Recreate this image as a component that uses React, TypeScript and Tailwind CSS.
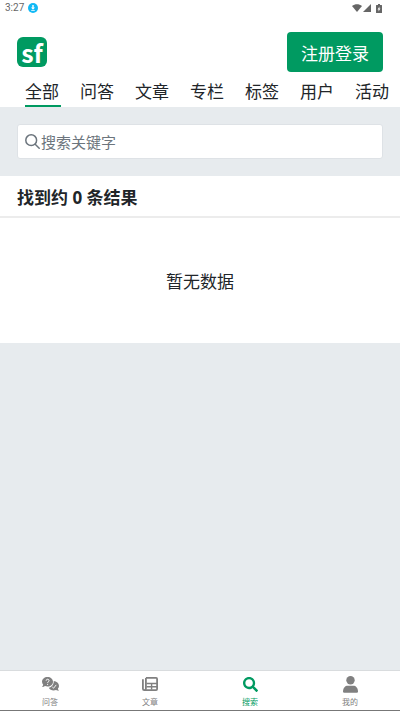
import clsx from "clsx";
import type { ReactNode } from "react";
import { FaSearch } from "react-icons/fa";

const tabs = ["全部", "问答", "文章", "专栏", "标签", "用户", "活动"];

function StatusBar() {
  return (
    <div className="flex h-4 items-center justify-between pl-[5px] pr-[18px] font-['Roboto',sans-serif] text-[10px] leading-4 text-[#666]">
      <div className="flex items-center gap-1">
        <span>3:27</span>
        <svg className="size-[10px]" viewBox="0 0 10 10" aria-hidden="true">
          <circle cx="5" cy="5" r="5" fill="#12b9f5" />
          <path d="M4.3 2h1.4v2.5H7L5 6.7 3 4.5h1.3zM3.2 7.3h3.6v.8H3.2z" fill="#fff" />
        </svg>
      </div>
      <div className="flex items-center gap-px">
        <svg className="h-2 w-[10px]" viewBox="0 0 10 8" fill="#666" aria-hidden="true">
          <path d="M0 2C3 -.5 7 -.5 10 2L5 8z" />
        </svg>
        <svg className="size-2" viewBox="0 0 8 8" fill="#666" aria-hidden="true">
          <path d="M8 0v8H0z" />
        </svg>
        <svg className="ml-1 h-[9px] w-[6px]" viewBox="0 0 6 9" aria-hidden="true">
          <path d="M2 0h2v1h1.5q.5 0 .5.5v7q0 .5-.5.5h-5Q0 9 0 8.5v-7Q0 1 .5 1H2z" fill="#666" />
          <path d="M3.4 2.5v2h1L2.6 7.5v-2h-1z" fill="#fff" />
        </svg>
      </div>
    </div>
  );
}

function SearchIcon() {
  return (
    <svg
      className="size-[15px] shrink-0"
      viewBox="0 0 15 15"
      fill="none"
      stroke="currentColor"
      strokeWidth="1.5"
      strokeLinecap="round"
      aria-hidden="true"
    >
      <circle cx="6.2" cy="6.2" r="5.4" />
      <path d="M10.2 10.2l4 4" />
    </svg>
  );
}

function QuestionIcon() {
  return (
    <svg className="h-[14px] w-[17px]" viewBox="0 0 17 14" fill="none" aria-hidden="true">
      <path
        d="M5.5 0C8.6 0 11 2.1 11 4.8S8.6 9.6 5.5 9.6c-.9 0-1.8-.2-2.5-.5C2.2 9.6 1.2 10 0 10c.7-.8 1.1-1.6 1.2-2.3C.4 6.9 0 5.9 0 4.8 0 2.100 2.4 0 5.5 0z"
        fill="currentColor"
      />
      <path
        d="M11.7 4c2.9.1 5.3 2.2 5.3 4.9 0 1-.4 1.9-1.1 2.7.1.8.5 1.5 1.1 2.2-1.2 0-2.2-.3-3-.8-.7.3-1.5.4-2.3.4-2.2 0-4-1-4.9-2.7C9.7 10.2 12 7.3 11.7 4z"
        fill="currentColor"
      />
      <path d="M4.1 3.7c0-1.9 3-1.9 3 0 0 1.1-1.5 1-1.5 2.2M5.6 6.9v1" stroke="#fff" />
      <path d="M10.3 10l1.3 1.2 2.6-3.3" stroke="#fff" strokeWidth=".9" />
    </svg>
  );
}

function ArticleIcon() {
  return (
    <svg
      className="h-[14px] w-4"
      viewBox="0 0 16 14"
      fill="none"
      stroke="currentColor"
      strokeWidth="1.8"
      aria-hidden="true"
    >
      <path d="M3.9.9h10.2q1 0 1 1v10.2q0 1-1 1H2.2q-1.3 0-1.3-1.300V2.300M3.900.9v10.700q0 1.500-1.500 1.500" />
      <path d="M4.5 6.5H15M4.5 9.7H15M9.6 6.500v6" strokeWidth="1.4" />
    </svg>
  );
}

function UserIcon() {
  return (
    <svg className="h-[17px] w-[15px]" viewBox="0 0 15 17" fill="currentColor" aria-hidden="true">
      <circle cx="7.5" cy="4.3" r="4.2" />
      <path d="M0 15.5C0 11.7 2.5 9.7 4.5 9.7h6c2 0 4.5 2 4.5 5.800q0 1.200-1.200 1.200H1.200Q0 16.700 0 15.500z" />
    </svg>
  );
}

function NavItem({ icon, label, active }: { icon: ReactNode; label: string; active?: boolean }) {
  return (
    <a
      href="#"
      aria-current={active ? "page" : undefined}
      className={clsx(
        "flex flex-1 flex-col items-center gap-[3px]",
        active ? "text-[#009a61]" : "text-[#808080]",
      )}
    >
      <span className="flex h-[18px] items-center">{icon}</span>
      <span className="text-[8px] leading-3">{label}</span>
    </a>
  );
}

export default function App() {
  return (
    <div className="flex min-h-screen flex-col bg-[#e7ebee] font-['Noto_Sans_CJK_SC',sans-serif] text-[17px] text-[#212529]">
      <header className="bg-white">
        <StatusBar />
        <div className="flex items-center justify-between px-[17px] pt-4">
          <a
            href="#"
            aria-label="sf"
            className="flex size-[30px] items-center justify-center rounded-md bg-[#009a61] text-[25px] font-bold leading-none text-white"
          >
            sf
          </a>
          <button
            type="button"
            className="h-10 w-24 rounded-[4px] bg-[#009a61] pt-0.5 text-white"
          >
            注册登录
          </button>
        </div>
        <nav className="flex gap-[19px] overflow-hidden pl-[25px] pt-0.5">
          {tabs.map((tab, i) => (
            <a
              key={tab}
              href="#"
              className={clsx(
                "w-9 shrink-0 border-b-2 pt-0.5 leading-[29px]",
                i === 0 ? "border-[#009a61]" : "border-transparent",
              )}
            >
              {tab}
            </a>
          ))}
        </nav>
      </header>

      <form className="px-[17px] py-[17px]">
        <label className="flex h-[35px] items-center rounded-[3px] border border-[#dee2e6] bg-white px-[7px] text-[#6c757d]">
          <SearchIcon />
          <input
            type="search"
            aria-label="搜索关键字"
            placeholder="搜索关键字"
            className="min-w-0 flex-1 pl-px text-[15px] leading-6 outline-none placeholder:text-[#6c757d]"
          />
        </label>
      </form>

      <main className="bg-white">
        <h1 className="border-b-2 border-[#ececec] px-[17px] pb-[6px] pt-[10px] font-['Noto_Sans','Noto_Sans_CJK_SC',sans-serif] font-bold leading-6">
          找到约 0 条结果
        </h1>
        <p className="py-[50px] text-center leading-[25px]">暂无数据</p>
      </main>

      <nav className="sticky bottom-0 mt-auto flex h-[41px] border-b border-t border-b-[#777] border-t-[#d9dcde] bg-white pt-1">
        <NavItem icon={<QuestionIcon />} label="问答" />
        <NavItem icon={<ArticleIcon />} label="文章" />
        <NavItem icon={<FaSearch className="size-[15px]" />} label="搜索" active />
        <NavItem icon={<UserIcon />} label="我的" />
      </nav>
    </div>
  );
}
